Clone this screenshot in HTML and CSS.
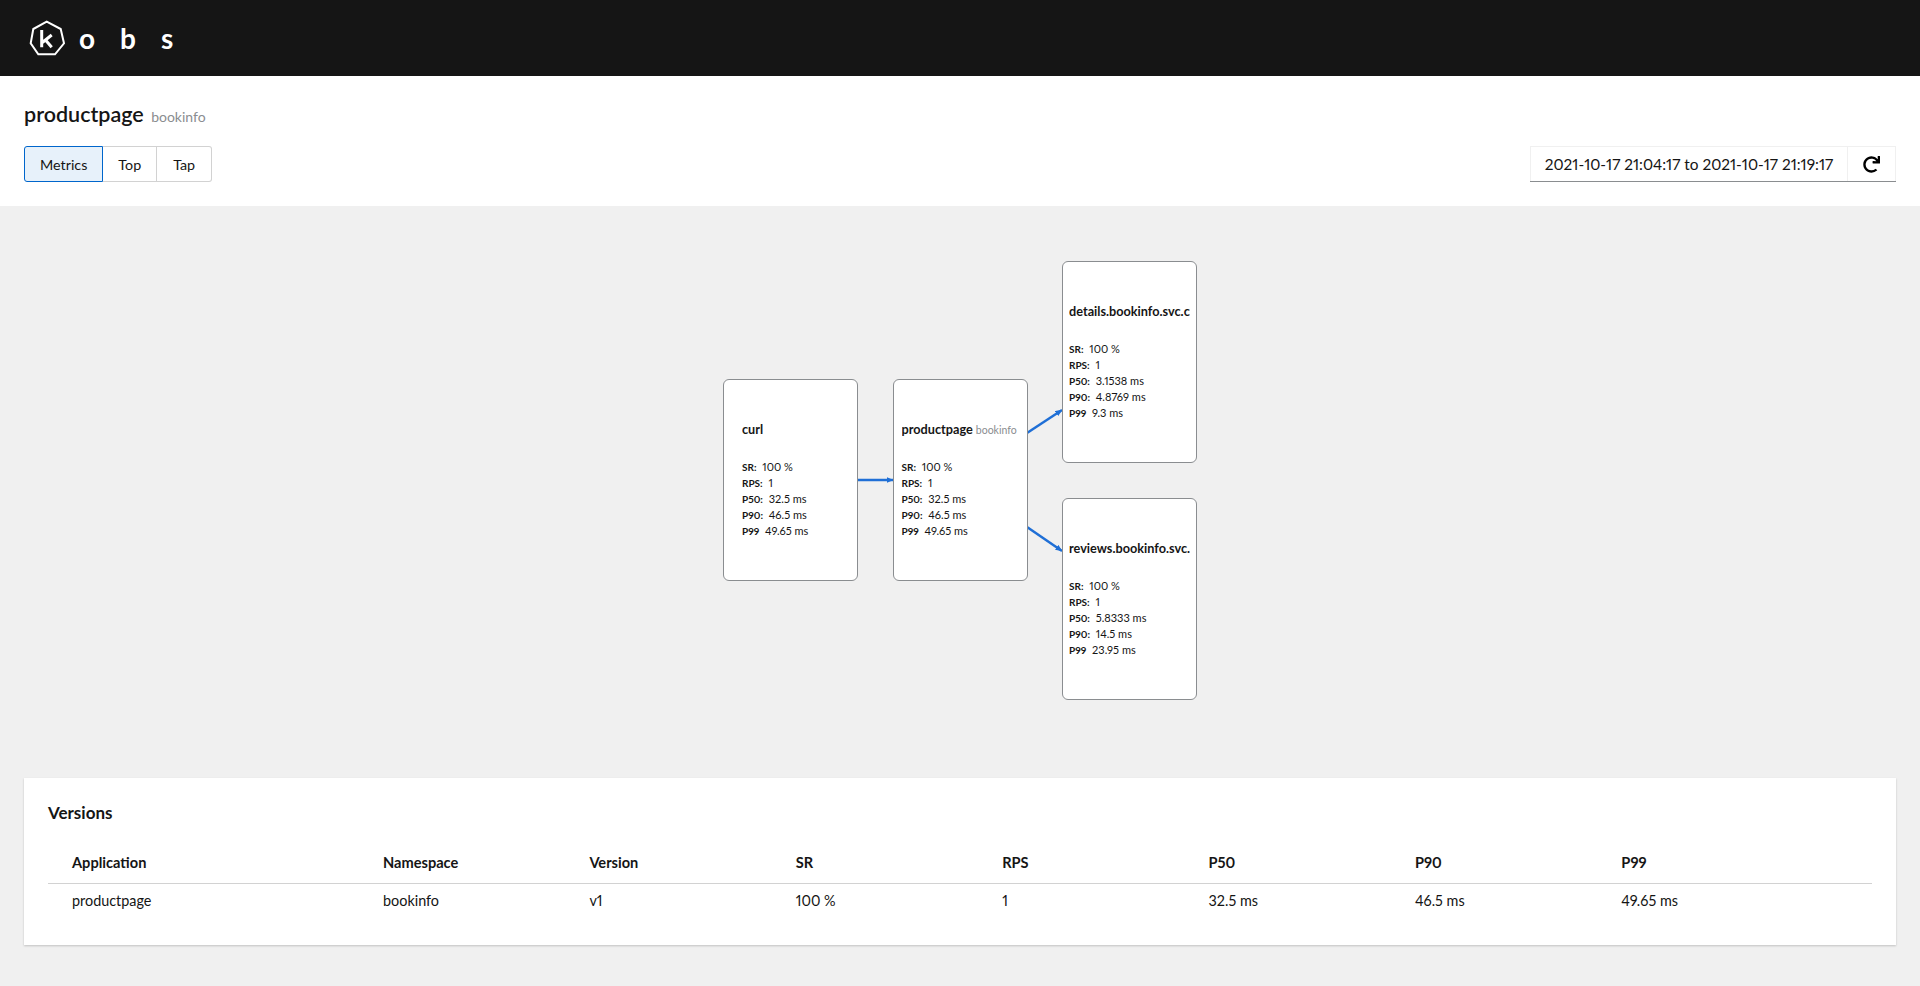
FILE: index.html
```html
<!DOCTYPE html>
<html>
<head>
  <title>kobs</title>
  <link rel="stylesheet" href="styles.css">
</head>
<body>
  <header class="masthead">
    <svg class="logo-mark" viewBox="0 0 40 40" width="40" height="40">
      <polygon class="logo-ring" points="18.7,3.7 32.7,11 36,25.3 27,36.3 10.3,36.3 2.7,25.3 5.3,11"/>
      <path class="logo-k" d="M13.7 12V29.3M23.7 17L13.7 25M17.5 22L23.7 29.3"/>
    </svg>
    <span class="logo-text">obs</span>
  </header>

  <section class="page-head">
    <h1 class="page-title">productpage <small>bookinfo</small></h1>
    <div class="page-controls">
      <div class="toggle-group">
        <button class="toggle selected">Metrics</button>
        <button class="toggle">Top</button>
        <button class="toggle">Tap</button>
      </div>
      <div class="time-picker">
        <button class="time-range">2021-10-17 21:04:17 to 2021-10-17 21:19:17</button>
        <button class="time-refresh">
          <svg viewBox="0 0 512 512" width="17" height="17"><path d="M500.3 0h-47.4a12 12 0 0 0-12 12.6l4 82.8A247.4 247.4 0 0 0 256 8C119.3 8 8 119.5 8 256.2 8 393.1 119.1 504 256 504a247.1 247.1 0 0 0 166.2-63.9 12 12 0 0 0 .5-17.4l-34-34a12 12 0 0 0-16.4-.6A176 176 0 1 1 402.1 157.8l-101.5-4.9a12 12 0 0 0-12.6 12v47.4a12 12 0 0 0 12 12h200.3a12 12 0 0 0 12-12V12a12 12 0 0 0-12-12z"/></svg>
        </button>
      </div>
    </div>
  </section>

  <main class="content">
    <div class="topology">
      <svg class="edges" viewBox="0 0 1872 530" width="1872" height="530">
        <defs>
          <marker id="arrow" markerWidth="7" markerHeight="6" refX="6.5" refY="3" orient="auto" markerUnits="userSpaceOnUse">
            <path d="M0 0L7 3L0 6z" fill="#1f6fd6"/>
          </marker>
        </defs>
        <line x1="834" y1="250" x2="869" y2="250" marker-end="url(#arrow)"/>
        <line x1="1003" y1="203" x2="1038" y2="180" marker-end="url(#arrow)"/>
        <line x1="1003" y1="297" x2="1038" y2="321" marker-end="url(#arrow)"/>
      </svg>

      <div class="node node-curl">
        <div class="node-name">curl</div>
        <div class="node-metrics">
          <div><b>SR:</b> 100 %</div>
          <div><b>RPS:</b> 1</div>
          <div><b>P50:</b> 32.5 ms</div>
          <div><b>P90:</b> 46.5 ms</div>
          <div><b>P99</b> 49.65 ms</div>
        </div>
      </div>

      <div class="node node-productpage">
        <div class="node-name">productpage <small>bookinfo</small></div>
        <div class="node-metrics">
          <div><b>SR:</b> 100 %</div>
          <div><b>RPS:</b> 1</div>
          <div><b>P50:</b> 32.5 ms</div>
          <div><b>P90:</b> 46.5 ms</div>
          <div><b>P99</b> 49.65 ms</div>
        </div>
      </div>

      <div class="node node-details">
        <div class="node-name">details.bookinfo.svc.cluster.local</div>
        <div class="node-metrics">
          <div><b>SR:</b> 100 %</div>
          <div><b>RPS:</b> 1</div>
          <div><b>P50:</b> 3.1538 ms</div>
          <div><b>P90:</b> 4.8769 ms</div>
          <div><b>P99</b> 9.3 ms</div>
        </div>
      </div>

      <div class="node node-reviews">
        <div class="node-name">reviews.bookinfo.svc.cluster.local</div>
        <div class="node-metrics">
          <div><b>SR:</b> 100 %</div>
          <div><b>RPS:</b> 1</div>
          <div><b>P50:</b> 5.8333 ms</div>
          <div><b>P90:</b> 14.5 ms</div>
          <div><b>P99</b> 23.95 ms</div>
        </div>
      </div>
    </div>

    <section class="card">
      <h2 class="card-title">Versions</h2>
      <table class="versions">
        <thead>
          <tr>
            <th class="col-app">Application</th>
            <th>Namespace</th>
            <th>Version</th>
            <th>SR</th>
            <th>RPS</th>
            <th>P50</th>
            <th>P90</th>
            <th>P99</th>
          </tr>
        </thead>
        <tbody>
          <tr>
            <td>productpage</td>
            <td>bookinfo</td>
            <td>v1</td>
            <td>100 %</td>
            <td>1</td>
            <td>32.5 ms</td>
            <td>46.5 ms</td>
            <td>49.65 ms</td>
          </tr>
        </tbody>
      </table>
    </section>
  </main>
</body>
</html>
```

FILE: styles.css
```css
* {
  box-sizing: border-box;
}

html, body {
  height: 100%;
}

body {
  margin: 0;
  display: flex;
  flex-direction: column;
  font-family: Lato, "Open Sans", sans-serif;
  font-variant-numeric: proportional-nums;
  color: #151515;
  background-color: #f0f0f0;
  overflow: hidden;
}

button {
  font: inherit;
  font-variant-numeric: proportional-nums;
  color: inherit;
  background: #fff;
  cursor: pointer;
}

/*top bar*/
.masthead {
  height: 76px;
  flex: none;
  display: flex;
  align-items: center;
  padding-left: 28px;
  background-color: #151515;
  color: #fff;
}

.logo-mark {
  flex: none;
}

.logo-ring {
  fill: none;
  stroke: #fff;
  stroke-width: 2;
}

.logo-k {
  fill: none;
  stroke: #fff;
  stroke-width: 3;
}

.logo-text {
  margin-left: 11px;
  font-size: 28px;
  font-weight: 700;
  letter-spacing: 25px;
}

/*title and tabs*/
.page-head {
  height: 130px;
  flex: none;
  padding: 23px 24px 0;
  background-color: #fff;
}

.page-title {
  margin: 0;
  height: 30px;
  font-size: 21.5px;
  line-height: 30px;
  font-weight: 600;
}

.page-title small {
  margin-left: 2px;
  font-size: 14px;
  font-weight: 400;
  color: #8a8d90;
}

.page-controls {
  margin-top: 17px;
  display: flex;
  justify-content: space-between;
}

.toggle-group {
  display: flex;
}

.toggle {
  height: 36px;
  padding: 0 15px;
  font-size: 14.3px;
  border: 1px solid #d2d2d2;
  border-left: 0;
}

.toggle:first-child {
  border-radius: 3px 0 0 3px;
}

.toggle:last-child {
  padding: 0 16px;
  border-radius: 0 3px 3px 0;
}

.toggle.selected {
  background-color: #e7f1fa;
  border: 1px solid #06c;
}

.time-picker {
  display: flex;
  gap: 1px;
  background-color: #f0f0f0;
  border-bottom: 1px solid #8a8d90;
}

.time-range,
.time-refresh {
  height: 35px;
  border: 0;
  border-top: 1px solid #f0f0f0;
}

.time-range {
  width: 317px;
  padding: 0;
  font-size: 15.4px;
  white-space: nowrap;
  border-left: 1px solid #f0f0f0;
}

.time-refresh {
  width: 48px;
  display: flex;
  align-items: center;
  justify-content: center;
  border-right: 1px solid #f0f0f0;
}

/*graph*/
.content {
  flex: 1;
  padding: 24px;
}

.topology {
  height: 548px;
  position: relative;
}

.edges {
  position: absolute;
  left: 0;
  top: 0;
}

.edges line {
  stroke: #1f6fd6;
  stroke-width: 2.5;
}

.node {
  position: absolute;
  width: 135px;
  height: 202px;
  padding: 0 6px;
  overflow: hidden;
  background-color: #fff;
  border: 1px solid #8a8d90;
  border-radius: 6px;
}

.node-curl {
  left: 699px;
  top: 148.5px;
  padding-left: 18px;
}

.node-productpage {
  left: 868.5px;
  top: 148.5px;
  padding-left: 8px;
}

.node-details {
  left: 1038px;
  top: 30.5px;
}

.node-reviews {
  left: 1038px;
  top: 267.5px;
}

.node-name {
  margin-top: 39px;
  height: 20px;
  line-height: 20px;
  font-size: 12.7px;
  font-weight: 700;
  white-space: nowrap;
  overflow: hidden;
}

.node-name small {
  font-size: 10.5px;
  font-weight: 400;
  color: #8a8d90;
}

.node-metrics {
  margin-top: 20px;
  font-size: 11px;
  line-height: 16px;
}

.node-metrics div {
  height: 16px;
}

.node-metrics b {
  margin-right: 3px;
  font-size: 10px;
  font-weight: 700;
}

/*versions table*/
.card {
  height: 167px;
  padding: 23px 24px 24px;
  background-color: #fff;
  box-shadow: 0 1px 2px rgba(3, 3, 3, 0.2);
}

.card-title {
  margin: 0;
  height: 24px;
  font-size: 17px;
  line-height: 24px;
  font-weight: 700;
}

.versions {
  width: 100%;
  margin-top: 17px;
  border-collapse: collapse;
  table-layout: fixed;
  font-size: 14.4px;
}

.versions th,
.versions td {
  width: 206.4px;
  padding: 0 24px;
  text-align: left;
}

.versions th.col-app {
  width: 311px;
}

.versions th:last-child {
  width: 275px;
}

.versions th {
  height: 41px;
  font-size: 14.6px;
  font-weight: 700;
  border-bottom: 1px solid #d2d2d2;
}

.versions td {
  height: 38px;
  padding-bottom: 3px;
}
```
